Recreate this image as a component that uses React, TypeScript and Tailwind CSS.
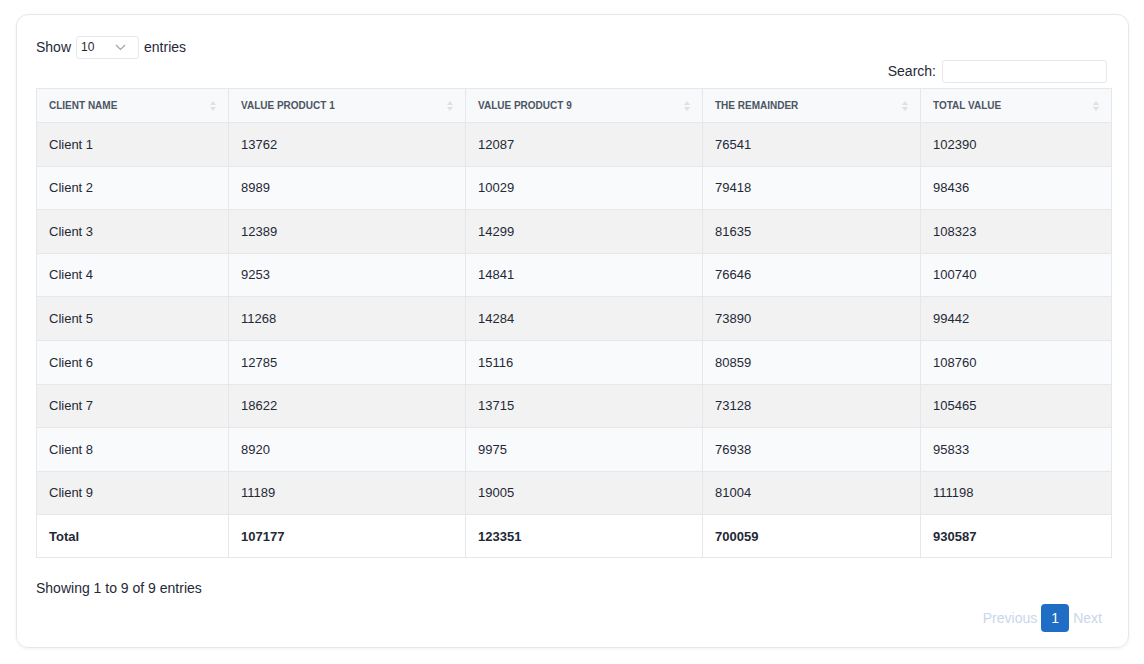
import React from "react";

const rows = [
  ["Client 1", "13762", "12087", "76541", "102390"],
  ["Client 2", "8989", "10029", "79418", "98436"],
  ["Client 3", "12389", "14299", "81635", "108323"],
  ["Client 4", "9253", "14841", "76646", "100740"],
  ["Client 5", "11268", "14284", "73890", "99442"],
  ["Client 6", "12785", "15116", "80859", "108760"],
  ["Client 7", "18622", "13715", "73128", "105465"],
  ["Client 8", "8920", "9975", "76938", "95833"],
  ["Client 9", "11189", "19005", "81004", "111198"],
];
const heads = ["Client Name", "Value Product 1", "Value Product 9", "The Remainder", "Total Value"];
const widths = ["w-[192px]", "w-[237px]", "w-[237px]", "w-[218px]", ""];

function Sort() {
  return (
    <svg width="6" height="12" viewBox="0 0 6 12" className="shrink-0">
      <path d="M3 1 L6 5 L0 5 Z" fill="#dde1e6" />
      <path d="M3 11 L6 7 L0 7 Z" fill="#dde1e6" />
    </svg>
  );
}

export default function App() {
  return (
    <div className="w-[1144px] h-[664px] bg-white pt-[14px] pl-[16px]" style={{ fontFamily: '"Liberation Sans", Arial, sans-serif' }}>
      <div className="w-[1113px] h-[634px] border border-[#e5e7eb] rounded-[12px] shadow-[0_1px_3px_rgba(0,0,0,0.06)] px-[19px] pt-[20px] text-[#1f2937]">
        <div className="flex items-center gap-[5px] text-[14px] h-[24px]">
          <span>Show</span>
          <div className="w-[63px] h-[23px] border border-[#e5e7eb] rounded-[3px] flex items-center justify-between pl-[4px] pr-[12px] text-[12px]">
            <span>10</span>
            <svg width="11" height="7" viewBox="0 0 11 7"><path d="M1 1 L5.5 5.5 L10 1" stroke="#9ca3af" strokeWidth="1.2" fill="none" /></svg>
          </div>
          <span>entries</span>
        </div>
        <div className="flex justify-end items-center gap-[6px] text-[14px] mr-[2px] mt-[0px] h-[24px]">
          <span>Search:</span>
          <div className="w-[165px] h-[23px] border border-[#e5e7eb] rounded-[3px]" />
        </div>
        <table className="w-[1076px] mt-[5px] border-collapse text-[13px] table-fixed">
          <thead>
            <tr className="bg-[#f8f9fa] h-[34px]">
              {heads.map((h, i) => (
                <th key={h} className={`${widths[i]} border border-[#e5e7eb] px-[12px] text-left`}>
                  <div className="flex items-center justify-between text-[10px] font-bold uppercase text-[#4b5563]">
                    <span>{h}</span>
                    <Sort />
                  </div>
                </th>
              ))}
            </tr>
          </thead>
          <tbody>
            {rows.map((r, ri) => (
              <tr key={ri} className={`h-[43.6px] ${ri % 2 === 0 ? "bg-[#f2f2f2]" : "bg-[#f9fafb]"}`}>
                {r.map((c, ci) => (
                  <td key={ci} className="border border-[#e5e7eb] px-[12px]">{c}</td>
                ))}
              </tr>
            ))}
            <tr className="h-[43px] bg-white font-bold">
              {["Total", "107177", "123351", "700059", "930587"].map((c, ci) => (
                <td key={ci} className="border border-[#e5e7eb] px-[12px]">{c}</td>
              ))}
            </tr>
          </tbody>
        </table>
        <div className="mt-[20px] text-[14px]">Showing 1 to 9 of 9 entries</div>
        <div className="flex justify-end items-center mt-[5px] mr-[7px] text-[14px] text-[#c9d6ea]">
          <span>Previous</span>
          <span className="mx-[4px] w-[28px] h-[28px] rounded-[4px] bg-[#1f6dc4] text-white flex items-center justify-center">1</span>
          <span>Next</span>
        </div>
      </div>
    </div>
  );
}
